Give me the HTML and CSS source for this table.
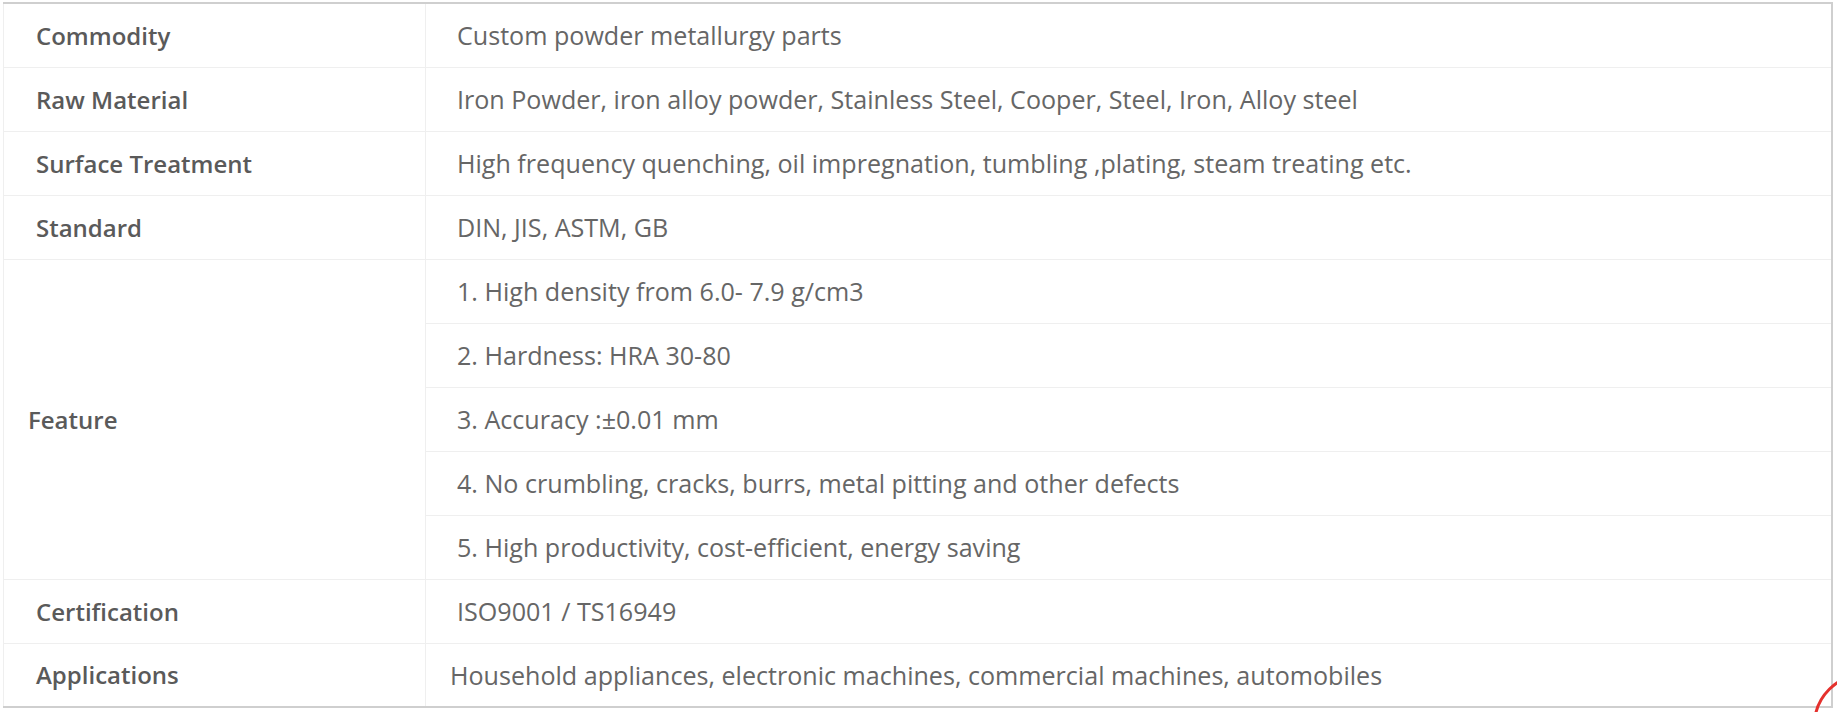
FILE: index.html
```html
<!DOCTYPE html>
<html>
<head>
<meta charset="utf-8">
<link rel="stylesheet" href="styles.css">
</head>
<body>
<div class="page">
  <table class="spec">
    <tbody>
      <tr><td class="label">Commodity</td><td class="value">Custom powder metallurgy parts</td></tr>
      <tr><td class="label">Raw Material</td><td class="value">Iron Powder, iron alloy powder, Stainless Steel, Cooper, Steel, Iron, Alloy steel</td></tr>
      <tr><td class="label">Surface Treatment</td><td class="value">High frequency quenching, oil impregnation, tumbling ,plating, steam treating etc.</td></tr>
      <tr><td class="label">Standard</td><td class="value">DIN, JIS, ASTM, GB</td></tr>
      <tr><td class="label label-tight" rowspan="5">Feature</td><td class="value">1. High density from 6.0- 7.9 g/cm3</td></tr>
      <tr><td class="value">2. Hardness: HRA 30-80</td></tr>
      <tr><td class="value">3. Accuracy :±0.01 mm</td></tr>
      <tr><td class="value">4. No crumbling, cracks, burrs, metal pitting and other defects</td></tr>
      <tr><td class="value">5. High productivity, cost-efficient, energy saving</td></tr>
      <tr><td class="label">Certification</td><td class="value">ISO9001 / TS16949</td></tr>
      <tr><td class="label">Applications</td><td class="value value-tight">Household appliances, electronic machines, commercial machines, automobiles</td></tr>
    </tbody>
  </table>
  <div class="chat-ring" aria-hidden="true"></div>
</div>
</body>
</html>
```

FILE: styles.css
```css
html, body {
  margin: 0;
  padding: 0;
  background: #ffffff;
}

.page {
  position: relative;
  width: 1837px;
  height: 712px;
  overflow: hidden;
  padding: 2px 0 0 3px;
  box-sizing: border-box;
  font-family: "Open Sans", "Liberation Sans", sans-serif;
}

.spec {
  width: 1830px;
  border-collapse: collapse;
  border-top: 2px solid #cfcfcf;
  border-left: 1px solid #dcdcdc;
  border-right: 2px solid #cfcfcf;
  border-bottom: 2px solid #cfcfcf;
}

.spec td {
  height: 64px;
  padding: 0;
  border: 1px solid #efefef;
  vertical-align: middle;
  box-sizing: border-box;
}

.label {
  width: 422px;
  padding-left: 32px !important;
  font-size: 24px;
  font-weight: 600;
  color: #5a5a5a;
}

.label-tight {
  padding-left: 24px !important;
}

.value {
  padding-left: 31px !important;
  font-size: 25.1px;
  font-weight: 400;
  color: #666666;
}

.value-tight {
  padding-left: 24px !important;
}

.chat-ring {
  position: absolute;
  left: 1813px;
  top: 673px;
  width: 104px;
  height: 104px;
  border: 3px solid #e5312d;
  border-radius: 50%;
  box-sizing: border-box;
}
```
